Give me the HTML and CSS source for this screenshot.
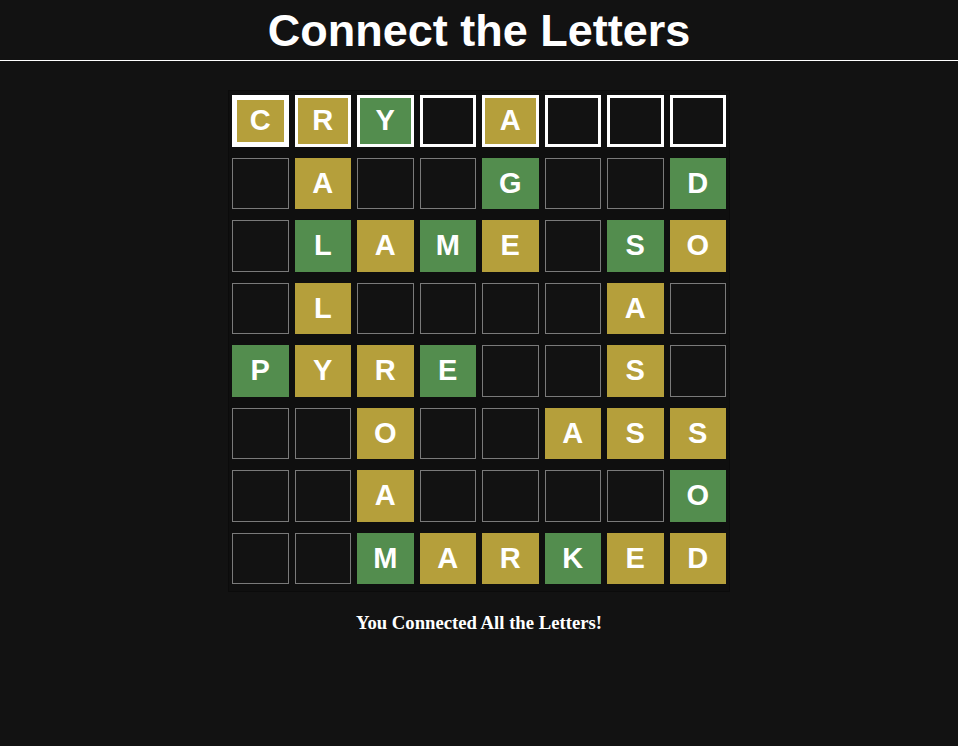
FILE: index.html
```html
<!DOCTYPE html>
<html lang="en">
<head>
<meta charset="utf-8">
<title>Connect the Letters</title>
<link rel="stylesheet" href="styles.css">
</head>
<body>
<header class="header">
  <h1 class="title">Connect the Letters</h1>
</header>
<main class="main">
  <div class="board">
    <div class="cell top gold selected">C</div>
    <div class="cell top gold">R</div>
    <div class="cell top green">Y</div>
    <div class="cell top"></div>
    <div class="cell top gold">A</div>
    <div class="cell top"></div>
    <div class="cell top"></div>
    <div class="cell top"></div>

    <div class="cell"></div>
    <div class="cell gold">A</div>
    <div class="cell"></div>
    <div class="cell"></div>
    <div class="cell green">G</div>
    <div class="cell"></div>
    <div class="cell"></div>
    <div class="cell green">D</div>

    <div class="cell"></div>
    <div class="cell green">L</div>
    <div class="cell gold">A</div>
    <div class="cell green">M</div>
    <div class="cell gold">E</div>
    <div class="cell"></div>
    <div class="cell green">S</div>
    <div class="cell gold">O</div>

    <div class="cell"></div>
    <div class="cell gold">L</div>
    <div class="cell"></div>
    <div class="cell"></div>
    <div class="cell"></div>
    <div class="cell"></div>
    <div class="cell gold">A</div>
    <div class="cell"></div>

    <div class="cell green">P</div>
    <div class="cell gold">Y</div>
    <div class="cell gold">R</div>
    <div class="cell green">E</div>
    <div class="cell"></div>
    <div class="cell"></div>
    <div class="cell gold">S</div>
    <div class="cell"></div>

    <div class="cell"></div>
    <div class="cell"></div>
    <div class="cell gold">O</div>
    <div class="cell"></div>
    <div class="cell"></div>
    <div class="cell gold">A</div>
    <div class="cell gold">S</div>
    <div class="cell gold">S</div>

    <div class="cell"></div>
    <div class="cell"></div>
    <div class="cell gold">A</div>
    <div class="cell"></div>
    <div class="cell"></div>
    <div class="cell"></div>
    <div class="cell"></div>
    <div class="cell green">O</div>

    <div class="cell"></div>
    <div class="cell"></div>
    <div class="cell green">M</div>
    <div class="cell gold">A</div>
    <div class="cell gold">R</div>
    <div class="cell green">K</div>
    <div class="cell gold">E</div>
    <div class="cell gold">D</div>
  </div>
  <p class="message">You Connected All the Letters!</p>
</main>
</body>
</html>
```

FILE: styles.css
```css
* {
  box-sizing: border-box;
}

html, body {
  margin: 0;
  background: #121212;
  color: #ffffff;
}

body {
  font-family: "Liberation Sans", Arial, sans-serif;
}

.header {
  height: 61px;
  border-bottom: 1px solid #ffffff;
  display: flex;
  align-items: center;
  justify-content: center;
  padding-top: 1px;
}

.title {
  margin: 0;
  font-size: 45px;
  font-weight: bold;
  line-height: 52px;
}

.main {
  display: flex;
  flex-direction: column;
  align-items: center;
  padding-top: 29px;
}

.board {
  width: 502px;
  border: 1px solid #0b0b0b;
  background: #0f0f0f;
  padding: 4px 3px 7px 3px;
  display: grid;
  grid-template-columns: repeat(8, 1fr);
  grid-auto-rows: 51.5px;
  column-gap: 6px;
  row-gap: 11px;
}

.cell {
  border: 1px solid #7a7a7a;
  background: #121212;
  display: flex;
  align-items: center;
  justify-content: center;
  font-size: 29px;
  font-weight: bold;
  color: #ffffff;
}

.cell.gold {
  background: #b59f3b;
  border-color: #b59f3b;
}

.cell.green {
  background: #538d4e;
  border-color: #538d4e;
}

.cell.top {
  border: 3px solid #ffffff;
}

.cell.top.selected {
  border-width: 5px;
}

.message {
  margin: 20px 0 0 0;
  font-family: "Liberation Serif", "Times New Roman", serif;
  font-size: 18.7px;
  font-weight: bold;
}
```
